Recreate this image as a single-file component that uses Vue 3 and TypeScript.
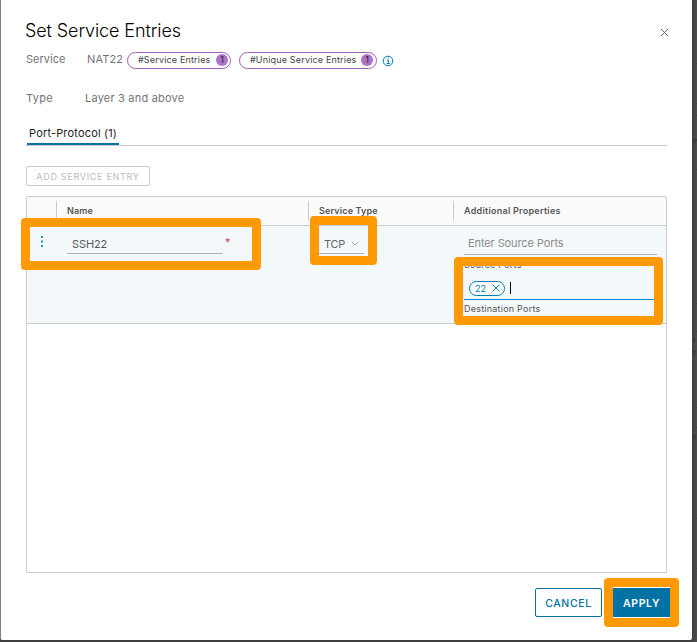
<script setup lang="ts">
import { ref } from 'vue'

interface Tag { label: string; count: number; kind: string }
interface Rule { y: number }

const tags: Tag[] = [
  { label: '#Service Entries', count: 1, kind: 'entries' },
  { label: '#Unique Service Entries', count: 1, kind: 'unique' },
]
const name = ref('SSH22')
const protocol = ref('TCP')
const ports = ref<string[]>(['22'])
const highlights = ['name', 'type', 'ports', 'apply']
// Row separators of the dimmed page behind the dialog
const rules: Rule[] = [63, 103, 115, 139, 169, 303, 331, 407, 427, 518, 568].map((y) => ({ y }))
</script>

<template>
  <div class="backdrop">
    <section class="modal">
      <header class="head">
        <h1>Set Service Entries</h1>
        <svg class="close" viewBox="0 0 9 9"><path d="M1 1L8 8M8 1L1 8" /></svg>
      </header>

      <div class="info service">
        <span class="key">Service</span>
        <span class="nat">NAT22</span>
        <span v-for="tag in tags" :key="tag.kind" class="tag" :class="tag.kind">
          <span class="tag-text">{{ tag.label }}</span><b>{{ tag.count }}</b>
        </span>
        <svg class="hint" viewBox="0 0 12 12">
          <circle cx="6" cy="6" r="4.8" />
          <path d="M5 5.2H6.3V8.4M4.6 8.5H7.8M5.6 3.3H6.8" />
        </svg>
      </div>
      <div class="info type">
        <span class="key">Type</span>
        <span class="layer">Layer 3 and above</span>
      </div>

      <nav class="tabs"><span class="tab">Port-Protocol (1)</span></nav>
      <button class="add">ADD SERVICE ENTRY</button>

      <div class="grid">
        <div class="cols header">
          <span></span>
          <span class="th">Name</span>
          <span class="th th-type">Service Type</span>
          <span class="th th-props">Additional Properties</span>
        </div>
        <div class="cols row">
          <svg class="dots" viewBox="0 0 4 13">
            <path d="M1 1h2v2h-2zM1 5.5h2v2h-2zM1 10h2v2h-2z" />
          </svg>
          <div class="cell">
            <span class="field name-field">{{ name }}</span><span class="star">*</span>
          </div>
          <div class="cell">
            <span class="field type-field">
              {{ protocol }}
              <svg viewBox="0 0 8 5"><path d="M.7 .8L4 4L7.3 .8" /></svg>
            </span>
          </div>
          <div class="cell ports-cell">
            <span class="field source">Enter Source Ports</span>
            <span class="label src-label">Source Ports</span>
            <span class="field dest">
              <span v-for="port in ports" :key="port" class="chip">
                {{ port }}
                <svg viewBox="0 0 8 8"><path d="M.8 .8L7.2 7.2M7.2 .8L.8 7.2" /></svg>
              </span>
              <i class="caret"></i>
            </span>
            <span class="label dst-label">Destination Ports</span>
          </div>
        </div>
      </div>

      <footer class="foot">
        <button class="btn cancel">CANCEL</button>
        <button class="btn apply">APPLY</button>
      </footer>
    </section>
    <svg class="behind" viewBox="0 0 5 642">
      <path v-for="rule in rules" :key="rule.y" :d="`M0 ${rule.y + 0.5}H5`" />
      <path class="ink" d="M1 140.5H5M3 140V145M1 340.5H3M1.5 338V343M1 351.5H4M1 353.5H4M1 435L4 439M4 435L1 439" />
    </svg>
    <div v-for="h in highlights" :key="h" class="mark" :class="h"></div>
  </div>
</template>

<style>
body { background: #4a4a4a; overflow: hidden; }
</style>

<style scoped>
* { box-sizing: border-box; }
.backdrop {
  position: relative;
  width: 697px;
  height: 642px;
  display: flex;
  background: linear-gradient(90deg, #3f3f3f 692px, #414243 693px, #4c4d4d 697px);
  font-family: Inter, "Open Sans", sans-serif;
  color: #565656;
}
.modal {
  flex: none;
  width: 692px;
  height: 640px;
  padding: 18px 25px 0;
  border-left: 1px solid #808080;
  border-radius: 0 0 2px 2px;
  background: #fff;
  display: flex;
  flex-direction: column;
}
.behind { width: 5px; height: 642px; stroke: #3c3d3d; }
.behind .ink { stroke: #353636; }
.head { height: 25px; display: flex; justify-content: space-between; }
h1 {
  margin: 0 0 0 -1px;
  font-size: 18px;
  font-weight: 300;
  line-height: 25px;
  letter-spacing: -.1px;
  color: #000;
}
.close { width: 9px; height: 9px; margin: 10px -2px 0 0; }
svg { fill: none; stroke: #666; flex: none; }
.info { display: flex; align-items: center; font-size: 11px; color: #737373; }
.service { height: 20px; margin-top: 7px; }
.key, .nat { line-height: 16px; margin-bottom: 2px; }
.service .key { width: 61px; letter-spacing: 0; }
.nat { width: 40px; letter-spacing: .15px; }
.tag {
  height: 17px;
  border: 1px solid #9460b8;
  border-radius: 9px;
  display: flex;
  align-items: center;
  justify-content: space-between;
  padding: 0 2px 0 10px;
  font-size: 9px;
  color: #444;
  white-space: nowrap;
}
.tag.entries { width: 104px; }
.tag.unique { width: 138px; margin-left: 8px; padding-right: 3px; }
.tag-text { letter-spacing: .17px; margin-top: -1px; }
.tag b {
  width: 12px;
  height: 12px;
  border-radius: 50%;
  background: #ad73c8;
  color: #222;
  font-weight: 400;
  line-height: 12px;
  text-align: center;
}
.hint { width: 12px; height: 12px; margin: 1px 0 0 5px; stroke: #0079b8; }
.type { height: 20px; margin-top: 19px; }
.type .key { width: 59px; letter-spacing: .3px; }
.layer { margin-bottom: 2px; line-height: 16px; letter-spacing: .2px; }
.tabs {
  height: 31px;
  width: 641px;
  margin-top: 6px;
  border-bottom: 1px solid #ccc;
  display: flex;
  align-items: flex-end;
}
.tab {
  height: 24px;
  width: 92px;
  margin-left: 1px;
  padding-left: 2px;
  border-bottom: 2px solid #0072a3;
  line-height: 24px;
  font-size: 11px;
  letter-spacing: .17px;
  color: #222;
  white-space: nowrap;
}
.add {
  width: 124px;
  height: 20px;
  margin-top: 20px;
  padding: 0;
  border: 1px solid #ccc;
  border-radius: 2px;
  background: #fff;
  color: #bbb;
  font: 9px Inter, sans-serif;
  letter-spacing: .7px;
  white-space: nowrap;
}
.grid { width: 641px; height: 377px; margin-top: 10px; border: 1px solid #ccc; border-radius: 2px 2px 0 0; }
.cols { display: grid; grid-template-columns: 29px 252px 145px 1fr; }
.header { height: 29px; border-bottom: 1px solid #ccc; background: #fafafa; align-items: center; }
.th {
  height: 20px;
  border-left: 1px solid #ccc;
  padding-left: 10px;
  line-height: 20px;
  font-size: 9px;
  font-weight: 600;
  letter-spacing: .15px;
}
.th-props { letter-spacing: .25px; }
.row { height: 98px; border-bottom: 1px solid #ccc; background: #f3f8fb; align-items: start; }
.dots { width: 4px; height: 13px; margin: 9px 0 0 13px; fill: #1b95c9; stroke: none; }
.cell { padding: 8px 0 0 11px; display: flex; }
.field {
  display: flex;
  align-items: center;
  height: 20px;
  border-bottom: 1px solid #b3b3b3;
  font-size: 11px;
  padding-left: 5px;
}
.name-field { width: 156px; letter-spacing: -.1px; }
.star { margin: 1px 0 0 2px; color: #c0504d; font-size: 11px; line-height: 15px; }
.type-field { width: 45px; color: #666; justify-content: space-between; padding-right: 5px; letter-spacing: -.25px; }
.type-field svg { width: 8px; height: 5px; stroke: #aaa; }
.ports-cell { flex-direction: column; }
.source { width: 193px; height: 21px; color: #8c8c8c; padding: 0 0 2px 4px; letter-spacing: -.1px; }
.label { font-size: 9px; line-height: 12px; letter-spacing: .23px; }
.src-label { margin-top: 4px; }
.dest { width: 193px; height: 28px; margin-top: 1px; border-color: #0088c8; padding-top: 5px; }
.chip {
  width: 36px;
  height: 15px;
  border: 1px solid #0079b8;
  border-radius: 8px;
  background: #fff;
  color: #0079b8;
  font-size: 9px;
  display: flex;
  align-items: center;
  justify-content: space-between;
  padding: 0 4px 0 5px;
}
.chip svg { width: 8px; height: 8px; stroke: #0079b8; }
.caret { width: 1px; height: 12px; margin-left: 5px; background: #000; }
.dst-label { margin-top: 3px; }
.foot { display: flex; margin: 15px 0 0 509px; width: 140px; gap: 11px; }
.btn {
  flex: none;
  height: 29px;
  border: 1px solid #0072a3;
  padding: 2px 0 0;
  font: 500 10.5px Inter, sans-serif;
  letter-spacing: .65px;
}
.cancel { width: 67px; border-radius: 2px; background: #fff; color: #0072a3; }
.btn.apply { width: 57px; background: #0072a3; color: #fff; font-weight: 600; }
.mark { position: absolute; border: 9px solid #ff9a05; border-radius: 4px; pointer-events: none; }
.mark.name { left: 21px; top: 218px; width: 240px; height: 52px; }
.mark.type { left: 310px; top: 216px; width: 67px; height: 49px; margin: 0; }
.mark.ports { left: 454px; top: 257px; width: 209px; height: 68px; }
.mark.apply { left: 604px; top: 578px; width: 75px; height: 49px; }
</style>
